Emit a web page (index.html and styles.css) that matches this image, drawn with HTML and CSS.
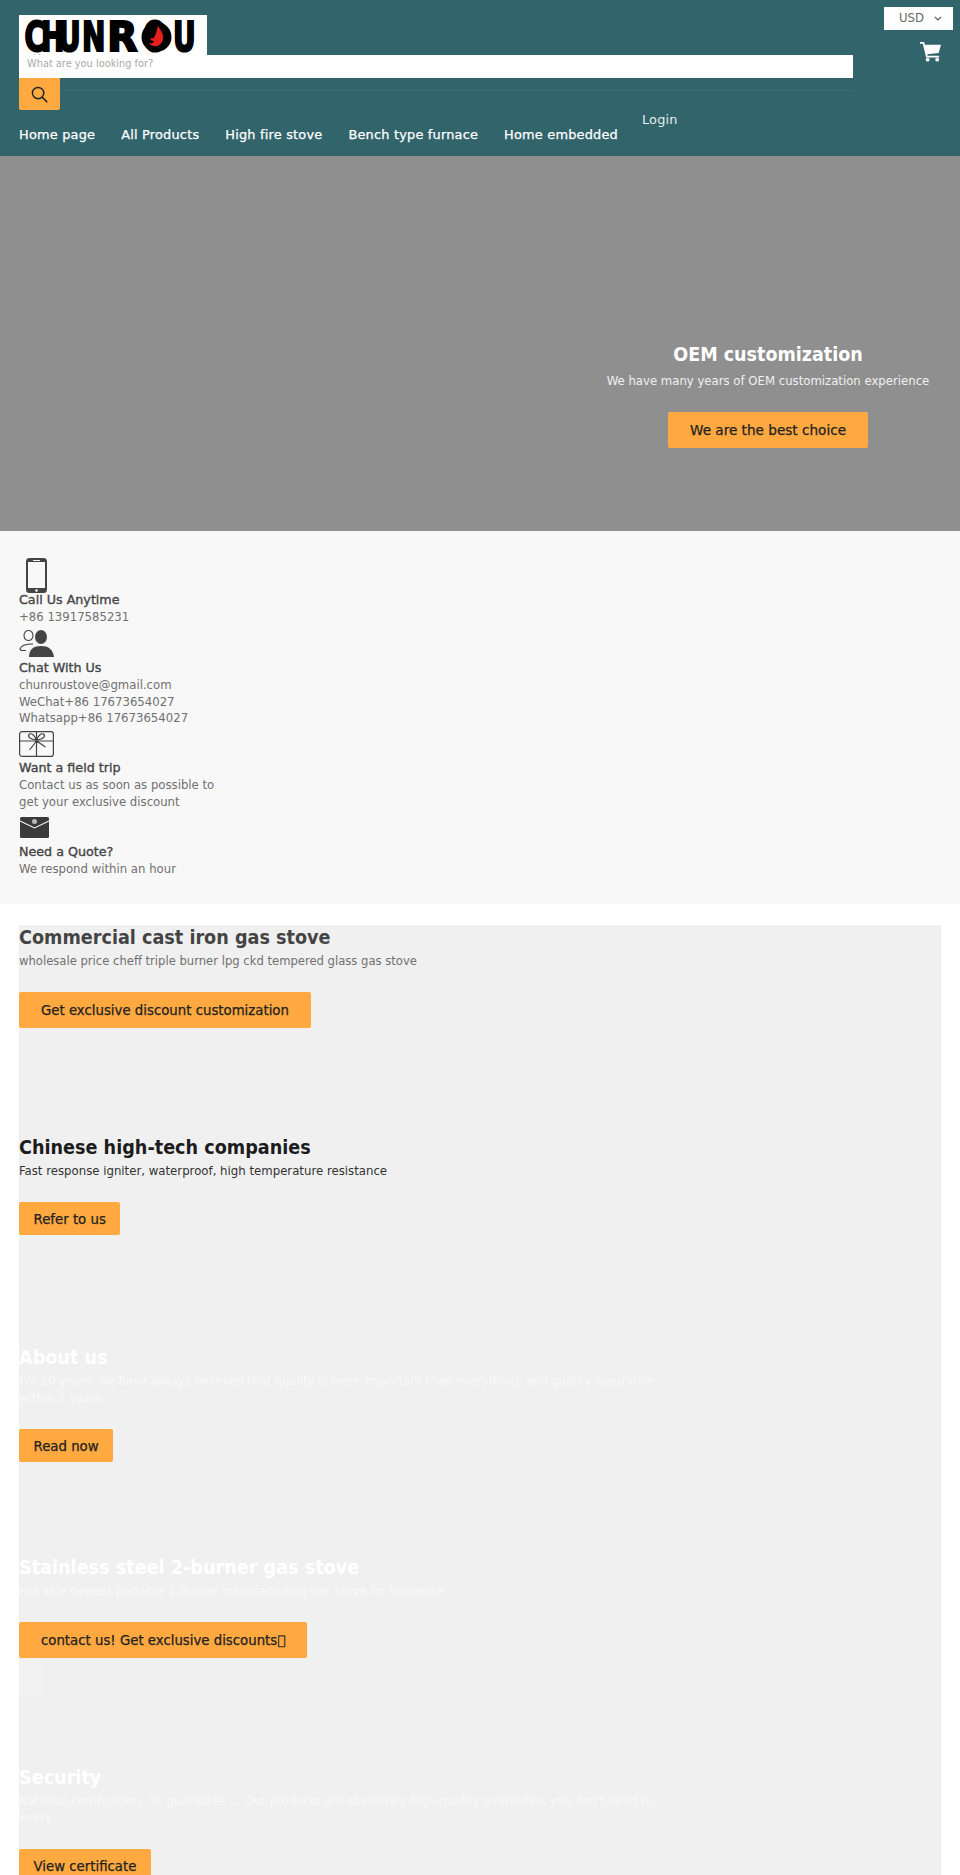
FILE: index.html
```html
<!DOCTYPE html>
<html lang="en">
<head>
<meta charset="utf-8">
<title>Chunrou</title>
<link rel="stylesheet" href="styles.css">
</head>
<body>
<header class="site-header">
  <div class="header-main">
    <a class="logo" href="#">
      <svg width="188" height="40" viewBox="0 0 188 40">
        <text class="logo-text" transform="scale(1 1.450)" y="25" x="5.500 22 39 63">CHUN</text>
        <text class="logo-text" transform="scale(1.400 1.450)" y="25" x="63">R</text>
        <text class="logo-text" transform="scale(1 1.450)" y="25" x="124 154">OU</text>
        <circle cx="137.500" cy="22" r="15" fill="#000"/>
        <path d="M139 11c3 5 6 8 5 13-1 5-5 8-9 7-2 0-4-1-5-3 3 1 4 0 5-2-2 0-4-1-4-3 2 1 4 0 5-2 1-3 2-6 3-10z" fill="#e8201c"/>
      </svg>
      <svg class="logo-chevron" width="6" height="4" viewBox="0 0 6 4" fill="none" stroke="#444" stroke-width="1"><path d="M.5.5 3 3 5.500.5"/></svg>
    </a>
    <form class="search">
      <div class="search-input">What are you looking for?</div>
      <div class="search-rule"></div>
      <button class="search-btn" type="button" aria-label="Search">
        <svg width="17" height="17" viewBox="0 0 18 18" fill="none" stroke="#222" stroke-width="1.600"><circle cx="7.500" cy="7.500" r="6"/><path d="M11.800 11.800l5.400 5.400"/></svg>
      </button>
    </form>
    <nav class="nav">
      <a href="#">Home page</a>
      <a href="#">All Products</a>
      <a href="#">High fire stove</a>
      <a href="#">Bench type furnace</a>
      <a href="#">Home embedded</a>
      <a class="login" href="#">Login</a>
    </nav>
  </div>
  <div class="header-side">
    <div class="currency">USD
      <svg width="8" height="5" viewBox="0 0 8 5" fill="none" stroke="#555" stroke-width="1.100"><path d="M.8.8 4 4 7.200.8"/></svg>
    </div>
    <svg class="cart" width="21" height="20" viewBox="0 0 22 21" fill="#fff"><path d="M0 0h4.200l1 2.800H22l-2.400 8.700-12 1.400.4 1.600h12v1.800H6.400L2.900 1.800H0z"/><circle cx="8" cy="18.600" r="2"/><circle cx="18" cy="18.600" r="2"/></svg>
  </div>
</header>

<section class="hero">
  <div class="hero-copy">
    <h2 class="hero-title">OEM customization</h2>
    <p class="hero-text">We have many years of OEM customization experience</p>
    <a class="btn btn-wide btn-hero" href="#">We are the best choice</a>
  </div>
</section>

<section class="info">
  <div class="info-item">
    <svg class="icon icon-phone" width="21" height="35" viewBox="0 0 21 35"><rect width="21" height="35" rx="3.500" fill="#444"/><rect x="2" y="4" width="17" height="26" fill="#f8f8f8"/><rect x="7" y="2" width="7" height="1" fill="#f8f8f8"/><circle cx="10.500" cy="32.500" r="1.300" fill="#f8f8f8"/></svg>
    <h3>Call Us Anytime</h3>
    <p>+86 13917585231</p>
  </div>
  <div class="info-item">
    <svg class="icon icon-person" width="35" height="27" viewBox="0 0 35 27"><ellipse cx="22" cy="7" rx="6" ry="7" fill="#444"/><path d="M10 27c0-8 5-11 12-11s12 3 13 11z" fill="#444"/><ellipse cx="9.500" cy="5.500" rx="4.500" ry="5" fill="none" stroke="#444" stroke-width="1.100"/><path d="M14 14c-6 0-12 1-13 5 0 1 1 1.500 3 1.500h3" fill="none" stroke="#444" stroke-width="1.100"/></svg>
    <h3>Chat With Us</h3>
    <p>chunroustove@gmail.com</p>
    <p>WeChat+86 17673654027</p>
    <p>Whatsapp+86 17673654027</p>
  </div>
  <div class="info-item">
    <svg class="icon icon-gift" width="35" height="26" viewBox="0 0 35 26" fill="none" stroke="#444" stroke-width="1.200"><rect x=".6" y=".6" width="33.800" height="24.800" rx="2.500"/><path d="M.6 10h33.800M17.500 1v24.400M17.500 9c-2-5-5-7-7-6-2 2-1 5 7 6zM17.500 9c2-5 5-7 7-6 2 2 1 5-7 6zM17.500 10l-7 9M17.500 10l9 6"/></svg>
    <h3>Want a field trip</h3>
    <p class="narrow">Contact us as soon as possible to get your exclusive discount</p>
  </div>
  <div class="info-item">
    <svg class="icon icon-mail" width="31" height="21" viewBox="0 0 31 21"><rect x="1" width="29" height="21" rx="1.500" fill="#3a3a3a"/><path d="M1 4l14.500 7L30 4" fill="none" stroke="#f8f8f8" stroke-width="1.100"/><circle cx="15.500" cy="4.500" r="2.500" fill="#bbb"/></svg>
    <h3>Need a Quote?</h3>
    <p>We respond within an hour</p>
  </div>
</section>

<section class="slides">
  <article class="slide slide-grey">
    <h2>Commercial cast iron gas stove</h2>
    <p>wholesale price cheff triple burner lpg ckd tempered glass gas stove</p>
    <a class="btn btn-wide" href="#">Get exclusive discount customization</a>
  </article>
  <article class="slide slide-dark">
    <h2>Chinese high-tech companies</h2>
    <p>Fast response igniter, waterproof, high temperature resistance</p>
    <a class="btn" href="#">Refer to us</a>
  </article>
  <article class="slide slide-white">
    <h2>About us</h2>
    <p>For 20 years, we have always believed that quality is more important than everything, and quality assurance within 5 years</p>
    <a class="btn" href="#">Read now</a>
  </article>
  <article class="slide slide-white">
    <h2>Stainless steel 2-burner gas stove</h2>
    <p>Hot sale newest portable 2 Burner manufacturing gas stove for homeuse</p>
    <a class="btn btn-wide" href="#">contact us! Get exclusive discounts&#xFFFF;</a>
    <div class="slide-ghost"></div>
  </article>
  <article class="slide slide-white">
    <h2>Security</h2>
    <p>National certification, 3C guarantee ... Our products are absolutely high-quality guarantee, you don't need to worry</p>
    <a class="btn" href="#">View certificate</a>
  </article>
</section>
</body>
</html>
```
FILE: styles.css
```css
* { box-sizing: border-box; }
html, body { margin: 0; padding: 0; }
body {
  width: 960px;
  height: 1875px;
  overflow: hidden;
  background: #fff;
  color: #707070;
  font-family: "DejaVu Sans Condensed", "DejaVu Sans", sans-serif;
  font-size: 13px;
  line-height: 16.500px;
}
a { color: inherit; text-decoration: none; }
h2, h3, p { margin: 0; }

.site-header {
  height: 156px;
  background: #32646b;
  display: flex;
  padding: 15px 7px 0 19px;
}
.header-main { width: 834px; }
.logo { display: block; position: relative; width: 188px; height: 40px; background: #fff; }
.logo svg { display: block; }
.logo .logo-chevron { position: absolute; left: 15px; top: 39px; }
.logo-text {
  font-family: "DejaVu Sans", sans-serif;
  font-weight: 700;
  font-size: 28px;
  fill: #000;
  stroke: #000;
  stroke-width: 1.500px;
}
.search { display: block; position: relative; }
.search-input {
  height: 23px;
  background: #fff;
  padding: 1px 8px 0;
  font-family: "DejaVu Sans", sans-serif;
  font-size: 9.800px;
  line-height: 16px;
  color: #aaa;
}
.search-rule {
  position: absolute;
  left: 0; right: 0; top: 35px;
  height: 1px;
  background: #3a6d74;
}
.search-btn {
  position: relative;
  display: flex;
  align-items: center;
  justify-content: center;
  width: 41px;
  height: 32px;
  padding: 0;
  border: 0;
  border-radius: 0 0 2px 2px;
  background: #ffa940;
}
.nav {
  display: flex;
  gap: 26px;
  margin-top: 17px;
  color: #fff;
  font-family: "DejaVu Sans", sans-serif;
  font-size: 12.900px;
  letter-spacing: .2px;
  line-height: 16px;
  -webkit-text-stroke: .25px #fff;
}
.nav a { white-space: nowrap; }
.nav .login { margin: -15px 0 0 -2px; color: #e4efef; -webkit-text-stroke: 0; }

.header-side {
  margin-left: auto;
  width: 69px;
  margin-top: -8px;
  display: flex;
  flex-direction: column;
  align-items: flex-end;
}
.currency {
  width: 69px;
  height: 23px;
  background: #fff;
  display: flex;
  align-items: center;
  justify-content: flex-end;
  gap: 10px;
  padding-right: 11px;
  color: #666;
}
.cart { margin: 12px 12px 0 0; }

.hero {
  height: 375px;
  background: #8f8f8f;
  display: flex;
  justify-content: flex-end;
  padding: 187px 22px 0 0;
}
.hero-copy {
  width: 340px;
  text-align: center;
  color: #fff;
}
.hero-title { font-size: 19.500px; font-weight: 700; line-height: 23px; }
.hero-text { margin: 7px 0 22.500px; color: #f0f0f0; }

.btn {
  display: inline-block;
  padding: 10px 14.500px 8px;
  border-radius: 2px;
  background: #ffa940;
  color: #222;
  font-family: "DejaVu Sans", sans-serif;
  font-size: 13.300px;
  line-height: 15px;
  white-space: nowrap;
  -webkit-text-stroke: .25px #222;
}
.btn-wide { padding: 11px 22px 10px; }
.btn-hero { font-size: 13.600px; }

.info {
  height: 373px;
  background: #f8f8f8;
  padding: 27px 19px 0;
}
.info-item { margin-bottom: 4.500px; }
.icon { display: block; }
.icon-phone { margin-left: 7px; margin-bottom: -2px; }
.icon-person { margin-bottom: 2px; }
.icon-gift { margin: 3px 0 2px; }
.icon-mail { margin: 7px 0 5px; }
.info-item h3 {
  font-family: "DejaVu Sans", sans-serif;
  font-size: 12.700px;
  font-weight: 400;
  line-height: 18px;
  color: #444;
  -webkit-text-stroke: .35px #444;
}
.narrow { width: 210px; }

.slides {
  margin: 21px 19px 0;
  background: #f0f0f0;
  height: 1000px;
}
.slide { height: 210px; }
.slide h2 { font-size: 19.600px; font-weight: 700; line-height: 25px; }
.slide p { width: 640px; margin: 3px 0 22.500px; font-size: 12.900px; }
.slide-grey h2 { color: #444; }
.slide-dark h2 { color: #1c1c1c; }
.slide-dark p { color: #333; font-size: 13.050px; }
.slide-white h2 { color: #fff; }
.slide-white p { color: #f9f9f9; }
.slide-ghost { width: 22px; height: 35px; margin-top: 2px; background: #f2f2f2; }
```
